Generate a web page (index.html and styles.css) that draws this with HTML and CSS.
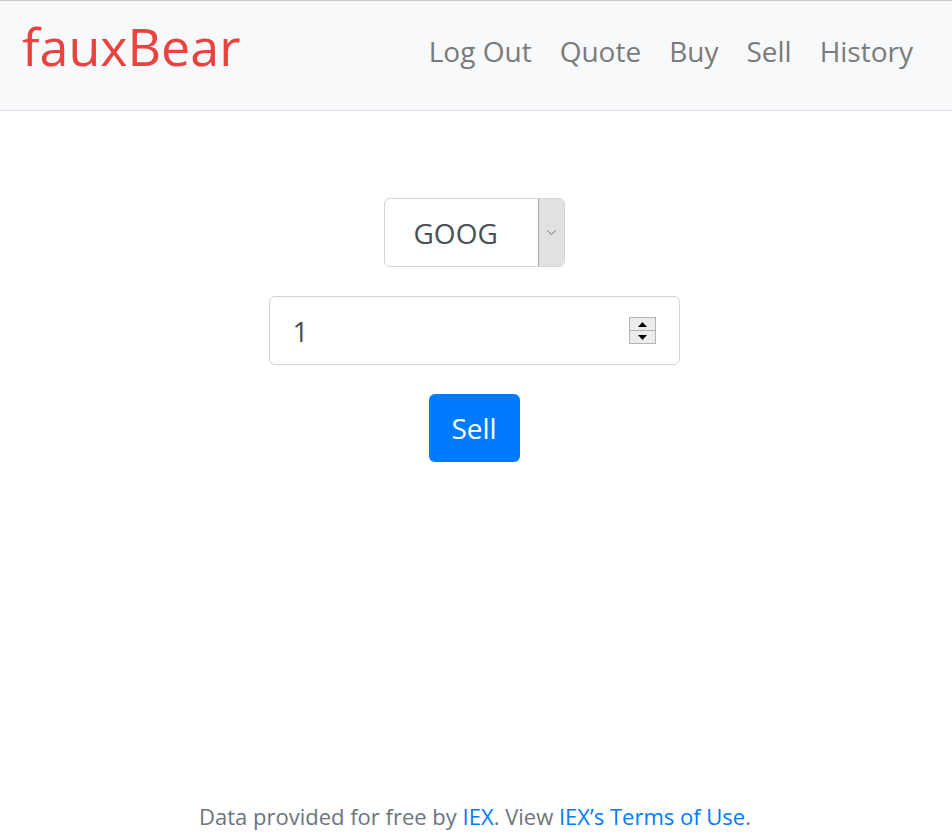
FILE: index.html
```html
<!DOCTYPE html>
<html lang="en">
<head>
<meta charset="utf-8">
<title>fauxBear: Sell</title>
<link rel="stylesheet" href="styles.css">
</head>
<body>
<nav class="navbar">
  <a class="brand" href="#">fauxBear</a>
  <ul class="nav-links">
    <li><a class="nav-link" href="#">Log Out</a></li>
    <li><a class="nav-link" href="#">Quote</a></li>
    <li><a class="nav-link" href="#">Buy</a></li>
    <li><a class="nav-link" href="#">Sell</a></li>
    <li><a class="nav-link" href="#">History</a></li>
  </ul>
</nav>
<main class="main">
  <form class="sell-form">
    <div class="select">
      <span class="select-value">GOOG</span>
      <span class="select-btn">
        <svg width="9" height="5" viewBox="0 0 9 5"><path d="M0.5 0.5 L4.5 4.5 L8.5 0.5" fill="none" stroke="#6d6d6d" stroke-width="1"/></svg>
      </span>
    </div>
    <div class="number">
      <span class="number-value">1</span>
      <span class="spin">
        <span class="spin-btn"><svg width="9" height="5" viewBox="0 0 9 5"><path d="M0 5 L4.5 0 L9 5 Z" fill="#000"/></svg></span>
        <span class="spin-btn"><svg width="9" height="5" viewBox="0 0 9 5"><path d="M0 0 L4.5 5 L9 0 Z" fill="#000"/></svg></span>
      </span>
    </div>
    <button class="btn" type="button">Sell</button>
  </form>
</main>
<footer class="footer">Data provided for free by <a href="#">IEX</a>. View <a href="#">IEX’s Terms of Use</a>.</footer>
</body>
</html>
```
FILE: styles.css
```css
* { box-sizing: border-box; }
html, body { margin: 0; padding: 0; }
body {
  font-family: "Open Sans", "Noto Sans", sans-serif;
  color: #212529;
  background: #fff;
  min-height: 100vh;
  display: flex;
  flex-direction: column;
}
a { text-decoration: none; }
.navbar {
  display: flex;
  align-items: center;
  justify-content: space-between;
  height: 111px;
  background: #f8f9fa;
  border-top: 1px solid #c8c8c8;
  border-bottom: 1px solid #dee2e6;
  padding: 0 25px 0 22px;
}
.brand {
  color: #e9423f;
  font-size: 52px;
  line-height: 1;
  margin-top: -20px;
}
.nav-links {
  display: flex;
  list-style: none;
  margin: -10px 0 0;
  padding: 0;
}
.nav-link {
  display: block;
  color: #7a7b7c;
  font-size: 28px;
  padding: 0 14px;
  line-height: 42px;
}
.main { flex: 1; }
.sell-form {
  display: flex;
  flex-direction: column;
  align-items: center;
  gap: 29px;
  padding-top: 87px;
  margin-left: -4px;
}
.select {
  display: flex;
  width: 181px;
  height: 69px;
  border: 1px solid #ced4da;
  border-radius: 6px;
  background: #fff;
  overflow: hidden;
}
.select-value {
  flex: 1;
  display: flex;
  align-items: center;
  padding-left: 29px;
  font-size: 28px;
  color: #495057;
}
.select-btn {
  width: 26px;
  display: flex;
  align-items: center;
  justify-content: center;
  background: #e1e1e1;
  border-left: 1px solid #a5a5a5;
}
.number {
  display: flex;
  align-items: center;
  width: 411px;
  height: 69px;
  border: 1px solid #ced4da;
  border-radius: 6px;
  padding: 0 23px 0 23px;
}
.number-value {
  flex: 1;
  font-size: 28px;
  color: #495057;
}
.spin {
  display: flex;
  flex-direction: column;
  width: 27px;
  height: 27px;
}
.spin-btn {
  flex: 1;
  display: flex;
  align-items: center;
  justify-content: center;
  background: #ececec;
  border: 1px solid #b4b4b4;
}
.spin-btn + .spin-btn { border-top: 1px solid #b4b4b4; margin-top: -1px; }
.btn {
  width: 91px;
  height: 68px;
  border: none;
  border-radius: 6px;
  background: #007bff;
  color: #fff;
  font-family: inherit;
  font-size: 28px;
  padding: 0;
}
.footer {
  text-align: center;
  font-size: 22px;
  color: #6c757d;
  line-height: 30px;
  padding: 0 0 7px;
  margin-left: -2px;
}
.footer a { color: #007bff; }
```
